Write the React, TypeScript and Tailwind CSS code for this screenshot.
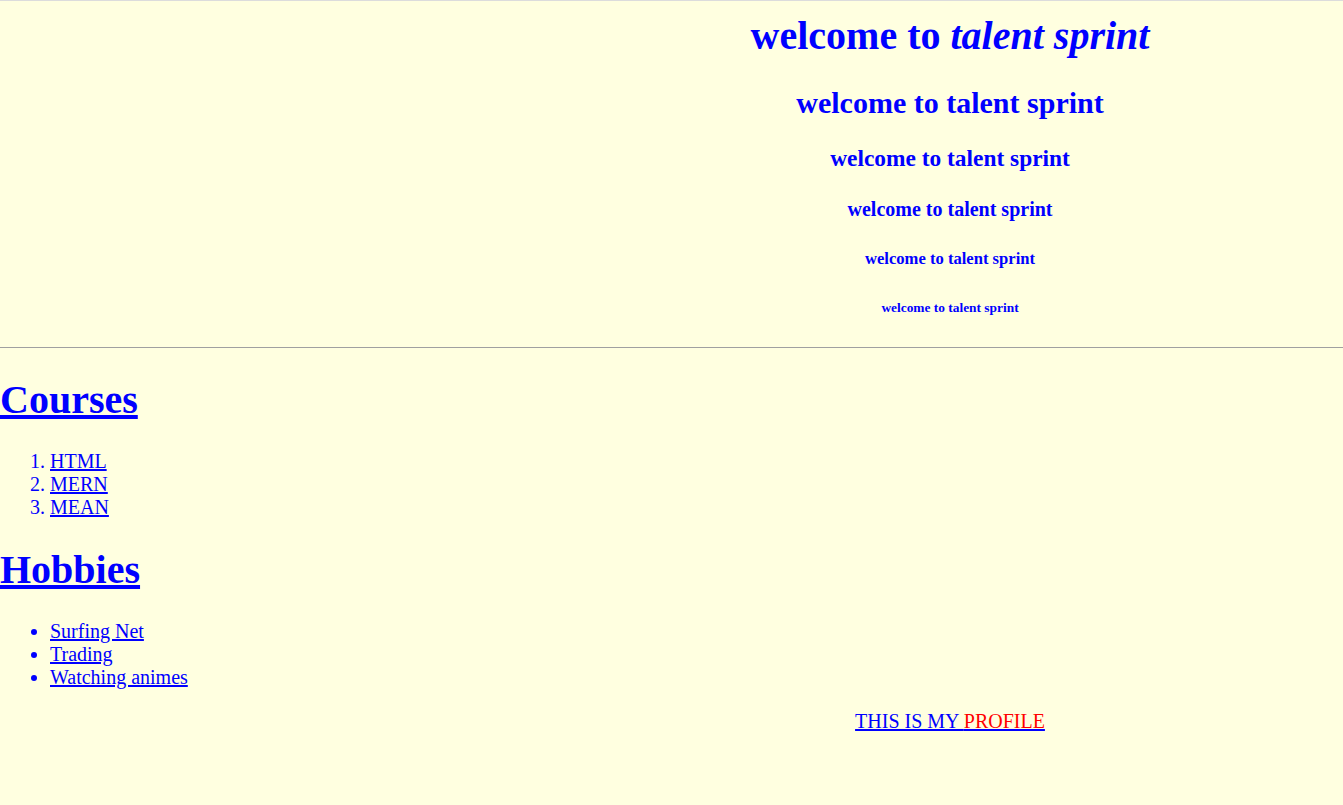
const courses = ["HTML", "MERN", "MEAN"];
const hobbies = ["Surfing Net", "Trading", "Watching animes"];

export default function App() {
  return (
    <div className="min-h-screen bg-[#ffffe0] border-t border-[#dcdcdc] font-['Liberation_Serif','Times_New_Roman',serif] text-[20px] leading-[normal] text-[#0000ff]">
      {/* banner headings */}
      <header className="pl-[557px] text-center font-bold">
        <h1 className="text-[40px] mt-[11px] mb-[26.8px]">
          welcome to <i>talent sprint</i>
        </h1>
        <h2 className="text-[30px] my-[24.9px]">welcome to talent sprint</h2>
        <h3 className="text-[23.4px] my-[23.4px]">welcome to talent sprint</h3>
        <h4 className="text-[20px] my-[26.6px]">welcome to talent sprint</h4>
        <h5 className="text-[16.6px] my-[27.7px]">welcome to talent sprint</h5>
        <h6 className="text-[13.4px] mt-[31.2px] mb-[31px]">welcome to talent sprint</h6>
      </header>

      <hr className="border-0 border-t border-[#a0a0a0]" />

      <section>
        <h1 className="text-[40px] font-bold mt-[27.8px] mb-[26.8px]">
          <a href="#" className="underline">Courses</a>
        </h1>
        <ol className="list-decimal pl-[50px]">
          {courses.map((c) => (
            <li key={c}>
              <a href="#" className="underline">{c}</a>
            </li>
          ))}
        </ol>

        <h1 className="text-[40px] font-bold mt-[26.8px] mb-[27.8px]">
          <a href="#" className="underline">Hobbies</a>
        </h1>
        <ul className="list-disc pl-[50px]">
          {hobbies.map((h) => (
            <li key={h}>
              <a href="#" className="underline">{h}</a>
            </li>
          ))}
        </ul>
      </section>

      <p className="pl-[557px] text-center mt-[21px]">
        <a href="#" className="underline">
          THIS IS MY <span className="text-[#ff0000]">PROFILE</span>
        </a>
      </p>
    </div>
  );
}
